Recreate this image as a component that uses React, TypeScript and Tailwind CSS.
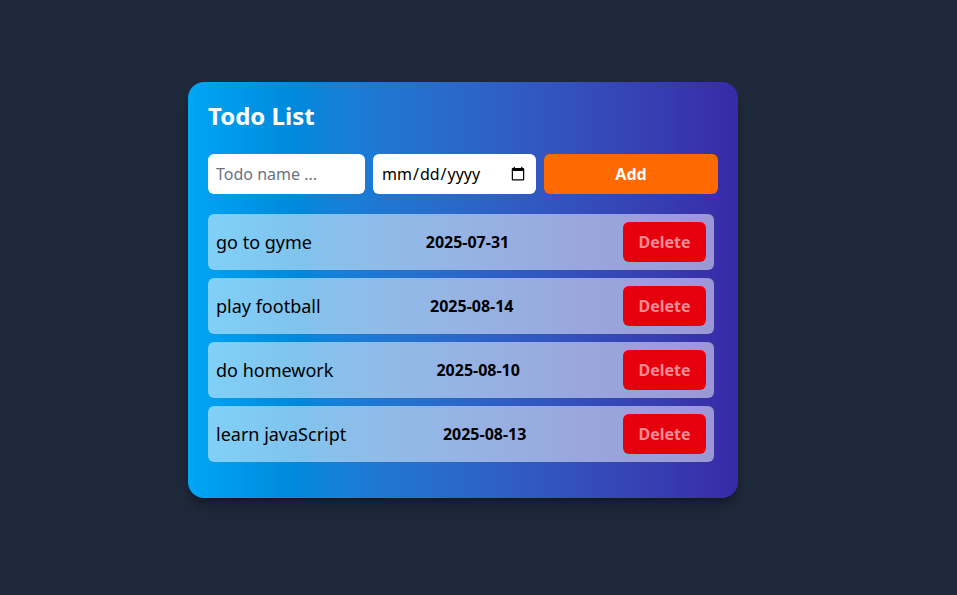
import { useState } from "react";

type Todo = { name: string; date: string };

const initialTodos: Todo[] = [
  { name: "go to gyme", date: "2025-07-31" },
  { name: "play football", date: "2025-08-14" },
  { name: "do homework", date: "2025-08-10" },
  { name: "learn javaScript", date: "2025-08-13" },
];

export default function App() {
  const [todos, setTodos] = useState<Todo[]>(initialTodos);
  const [name, setName] = useState("");
  const [date, setDate] = useState("");

  const addTodo = () => {
    if (!name.trim()) return;
    setTodos([...todos, { name: name.trim(), date }]);
    setName("");
    setDate("");
  };

  return (
    <div className="min-h-screen bg-[#1e293b] pl-[188px] pt-[82px] font-['Noto_Sans',sans-serif]">
      <div className="w-[550px] rounded-2xl bg-linear-to-r from-[#00a6f4] via-[#0088dc] via-20% to-[#3829a8] px-5 pb-9 pt-5 shadow-lg shadow-black/30">
        <h1 className="mb-5 text-2xl leading-7 pb-1 font-bold text-white">Todo List</h1>

        <div className="mb-5 flex gap-2">
          <input
            value={name}
            onChange={(e) => setName(e.target.value)}
            placeholder="Todo name ..."
            className="h-10 w-[157px] rounded-md bg-white px-2 text-base text-black outline-none placeholder:text-gray-500"
          />
          <input
            type="date"
            value={date}
            onChange={(e) => setDate(e.target.value)}
            className="h-10 w-[163px] rounded-md bg-white px-2 text-base text-black outline-none"
          />
          <button
            onClick={addTodo}
            className="h-10 flex-1 rounded-md bg-[#ff6900] text-base font-bold text-white"
          >
            Add
          </button>
        </div>

        <div className="flex w-[506px] flex-col gap-2">
          {todos.map((todo, i) => (
            <div
              key={i}
              className="flex h-14 items-center justify-between rounded-md bg-white/50 pl-2 pr-2"
            >
              <span className="text-lg text-black">{todo.name}</span>
              <span className="text-base font-bold text-black">{todo.date}</span>
              <button
                onClick={() => setTodos(todos.filter((_, j) => j !== i))}
                className="h-10 w-[83px] rounded-md bg-[#e7000b] text-base font-bold text-[#f98b95]"
              >
                Delete
              </button>
            </div>
          ))}
        </div>
      </div>
    </div>
  );
}
